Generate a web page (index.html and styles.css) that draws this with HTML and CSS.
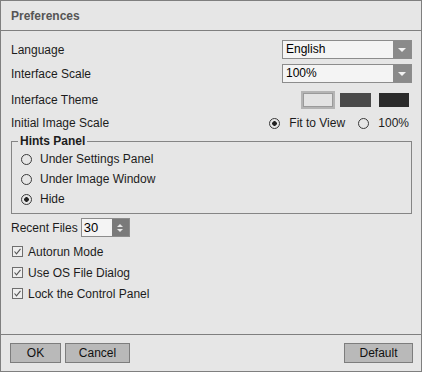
FILE: index.html
```html
<!DOCTYPE html>
<html lang="en">
<head>
    <meta charset="UTF-8">
    <title>Preferences</title>
    <link rel="stylesheet" href="styles.css">
</head>
<body>
    <div class="dialog">
        <div class="title">Preferences</div>

        <div class="content">
            <div class="row row-select">
                <span>Language</span>
                <div class="select">
                    <span class="select-value">English</span>
                    <span class="select-arrow"></span>
                </div>
            </div>
            <div class="row row-select">
                <span>Interface Scale</span>
                <div class="select">
                    <span class="select-value">100%</span>
                    <span class="select-arrow"></span>
                </div>
            </div>
            <div class="row row-theme">
                <span>Interface Theme</span>
                <div class="swatches">
                    <span class="swatch swatch-light selected"></span>
                    <span class="swatch swatch-gray"></span>
                    <span class="swatch swatch-dark"></span>
                </div>
            </div>
            <div class="row row-scale">
                <span>Initial Image Scale</span>
                <div class="options">
                    <span class="radio checked"></span>
                    <span class="option-text first">Fit to View</span>
                    <span class="radio"></span>
                    <span class="option-text last">100%</span>
                </div>
            </div>

            <fieldset class="group">
                <legend>Hints Panel</legend>
                <div class="radio-row"><span class="radio"></span>Under Settings Panel</div>
                <div class="radio-row"><span class="radio"></span>Under Image Window</div>
                <div class="radio-row"><span class="radio checked"></span>Hide</div>
            </fieldset>

            <div class="recent">
                <span>Recent Files</span>
                <div class="spin">
                    <span class="spin-value">30</span>
                    <span class="spin-arrows">
                        <span class="up"></span>
                        <span class="down"></span>
                    </span>
                </div>
            </div>

            <div class="check-row">
                <span class="check"><svg width="9" height="9" viewBox="0 0 9 9"><path d="M1.5 4.5 L3.5 6.8 L7.5 1.8" fill="none" stroke="#555" stroke-width="1.1"/></svg></span>
                Autorun Mode
            </div>
            <div class="check-row">
                <span class="check"><svg width="9" height="9" viewBox="0 0 9 9"><path d="M1.5 4.5 L3.5 6.8 L7.5 1.8" fill="none" stroke="#555" stroke-width="1.1"/></svg></span>
                Use OS File Dialog
            </div>
            <div class="check-row">
                <span class="check"><svg width="9" height="9" viewBox="0 0 9 9"><path d="M1.5 4.5 L3.5 6.8 L7.5 1.8" fill="none" stroke="#555" stroke-width="1.1"/></svg></span>
                Lock the Control Panel
            </div>
        </div>

        <div class="footer">
            <button class="btn btn-ok">OK</button>
            <button class="btn btn-cancel">Cancel</button>
            <button class="btn btn-default">Default</button>
        </div>
    </div>
</body>
</html>
```

FILE: styles.css
```css
:root {
    --bg: #e6e6e6;
    --line: #7f7f7f;
    --text: #1c1c1c;
    --control: #f4f4f4;
    --arrow-bg: #8a8a8a;
    --button: #b9b9b9;
}
body {
    margin: 0;
    font-family: 'Liberation Sans', Arial, sans-serif;
    font-size: 12px;
    color: var(--text);
    background: var(--bg);
}
.dialog {
    width: 422px;
    height: 372px;
    box-sizing: border-box;
    border: 1px solid var(--line);
    background: var(--bg);
    display: flex;
    flex-direction: column;
}
.title {
    height: 29px;
    line-height: 30px;
    padding-left: 10px;
    font-weight: bold;
    color: #555;
    border-bottom: 1px solid var(--line);
}
.content {
    padding: 9px 9px 0 10px;
    display: flex;
    flex-direction: column;
}
.row {
    display: flex;
    align-items: center;
    justify-content: space-between;
}
.row-select {
    height: 19px;
    margin-bottom: 5px;
}
.row-theme {
    height: 18px;
    margin-top: 3px;
}
.row-scale {
    height: 18px;
    margin-top: 5px;
}

/* dropdowns */
.select {
    width: 130px;
    height: 19px;
    box-sizing: border-box;
    border: 1px solid #8c8c8c;
    background: var(--control);
    display: flex;
}
.select-value {
    flex: 1;
    padding-left: 3px;
    line-height: 17px;
    color: #000;
}
.select-arrow {
    width: 18px;
    background: var(--arrow-bg);
    display: flex;
    align-items: center;
    justify-content: center;
}
.select-arrow::after {
    content: '';
    border-left: 4px solid transparent;
    border-right: 4px solid transparent;
    border-top: 4px solid #f2f2f2;
}

/* theme swatches */
.swatches {
    display: flex;
    align-items: center;
    margin-right: 3px;
}
.swatch {
    width: 31px;
    height: 14px;
}
.swatch-light {
    width: 30px;
    background: #e3e3e3;
}
.swatch.selected {
    border: 2px solid #b4b4b4;
    box-shadow: inset 0 0 0 1px #9a9a9a;
}
.swatch-gray {
    background: #4a4a4a;
    margin-left: 5px;
}
.swatch-dark {
    width: 30px;
    background: #2b2b2b;
    margin-left: 8px;
}

/* radios */
.options {
    display: flex;
    align-items: center;
}
.radio {
    width: 11px;
    height: 11px;
    box-sizing: border-box;
    border: 1px solid #3a3a3a;
    border-radius: 50%;
    flex-shrink: 0;
}
.radio.checked {
    background: radial-gradient(circle, #222 0 2px, transparent 2.6px);
}
.option-text {
    margin-left: 9px;
    margin-right: 9px;
}
.option-text.first {
    min-width: 60px;
}
.option-text.last {
    margin-right: 3px;
}

.group {
    margin: 2px 0 0 0;
    padding: 1px 6px 4px 9px;
    border: 1px solid #858585;
}
.group legend {
    font-weight: bold;
    line-height: 14px;
    padding: 0 2px;
    margin-left: -3px;
}
.radio-row {
    height: 20px;
    display: flex;
    align-items: center;
}
.radio-row .radio {
    margin-right: 8px;
}

/* recent files */
.recent {
    margin-top: 4px;
    height: 19px;
    display: flex;
    align-items: center;
}
.spin {
    margin-left: 3px;
    width: 49px;
    height: 19px;
    box-sizing: border-box;
    border: 1px solid #8c8c8c;
    background: var(--control);
    display: flex;
}
.spin-value {
    flex: 1;
    padding-left: 2px;
    line-height: 17px;
    font-size: 13px;
    color: #000;
}
.spin-arrows {
    width: 17px;
    background: #7a7a7a;
    display: flex;
    flex-direction: column;
    align-items: center;
    justify-content: center;
    gap: 2px;
}
.spin-arrows .up {
    border-left: 3px solid transparent;
    border-right: 3px solid transparent;
    border-bottom: 3px solid #e8e8e8;
}
.spin-arrows .down {
    border-left: 3px solid transparent;
    border-right: 3px solid transparent;
    border-top: 3px solid #e8e8e8;
}

/* checkboxes */
.check-row {
    height: 21px;
    display: flex;
    align-items: center;
}
.recent + .check-row {
    margin-top: 4px;
}
.check {
    width: 11px;
    height: 11px;
    box-sizing: border-box;
    border: 1px solid #6e6e6e;
    background: #eeeeee;
    margin-left: 1px;
    margin-right: 5px;
    display: flex;
    align-items: center;
    justify-content: center;
}

/* footer */
.footer {
    margin-top: auto;
    border-top: 1px solid var(--line);
    padding: 8px 8px 8px 9px;
    display: flex;
}
.btn {
    height: 20px;
    box-sizing: border-box;
    border: 1px solid #7d7d7d;
    background: var(--button);
    font-family: 'Liberation Sans', Arial, sans-serif;
    font-size: 12px;
    color: #111;
    padding: 0;
    border-radius: 0;
}
.btn-ok {
    width: 51px;
}
.btn-cancel {
    width: 65px;
    margin-left: 4px;
}
.btn-default {
    width: 69px;
    margin-left: auto;
}
```
